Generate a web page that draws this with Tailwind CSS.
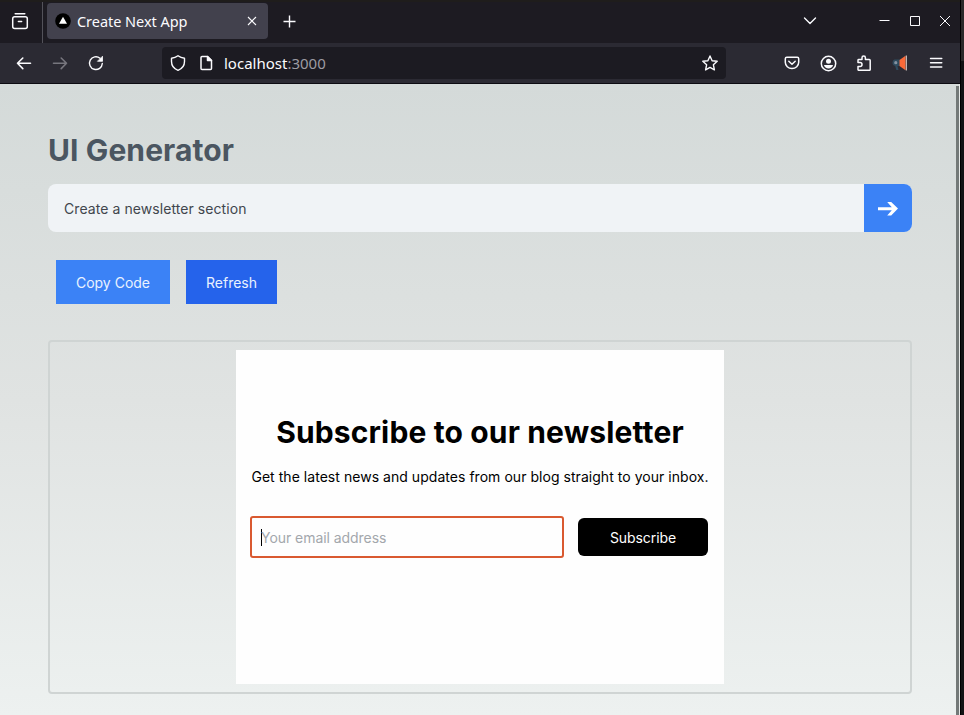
<!DOCTYPE html>
<html lang="en">
<head>
<meta charset="utf-8">
<title>Create Next App</title>
<script src="https://cdn.jsdelivr.net/npm/@tailwindcss/browser@4"></script>
</head>
<body class="w-[964px] h-[715px] overflow-hidden bg-[#151617] flex font-['Inter',sans-serif]">
<div class="w-[960px] h-full flex flex-col shrink-0">
  <header class="shrink-0 text-[#fbfbfe] font-['Noto_Sans',sans-serif]">
    <div class="h-[43px] bg-[#1d1b22] border-t-2 border-[#1f1d1c] flex items-start">
      <div class="w-[43px] h-[41px] border-r border-[#53525a] flex items-center justify-center pr-0.5 pb-[3px]">
        <svg class="w-[18px] h-[18px]" viewBox="0 0 18 18" fill="none" stroke="currentColor" stroke-width="1.5" stroke-linecap="round"><path d="M4.200 1.800h9.600"/><rect x="1.700" y="4.700" width="14.600" height="11.800" rx="2"/><path d="M7.400 9.500h3.200"/></svg>
      </div>
      <div class="ml-1 mt-px w-[221px] h-9 rounded-[4px] bg-[#42414d] flex items-center pl-2 pr-[9px]">
        <svg class="w-4 h-4" viewBox="0 0 16 16"><circle cx="8" cy="8" r="7.800" fill="#000"/><path d="M8 3.800l4 7H4z" fill="#fff"/></svg>
        <span class="ml-1.5 text-[14.5px] leading-5 tracking-[-0.04px] whitespace-nowrap">Create Next App</span>
        <svg class="ml-auto w-3.5 h-3.5" viewBox="0 0 14 14" fill="none" stroke="currentColor" stroke-width="1.100"><path d="M3 3l8 8M11 3l-8 8"/></svg>
      </div>
      <svg class="ml-[15px] mt-[13px] w-[13px] h-[13px]" viewBox="0 0 13 13" fill="none" stroke="currentColor" stroke-width="1.400"><path d="M6.500.5v12M.5 6.500h12"/></svg>
      <svg class="ml-auto mr-[62px] mt-[13px] w-[14px] h-[12px]" viewBox="0 0 14 12" fill="none" stroke="currentColor" stroke-width="1.400" stroke-linecap="round" stroke-linejoin="round"><path d="M1.500 3L7 8.500 12.500 3"/></svg>
      <svg class="mr-5 mt-[13px] w-[11px] h-[11px]" viewBox="0 0 11 11"><path d="M.5 5h10v1H.5z" fill="currentColor"/></svg>
      <svg class="mr-5 mt-[14px] w-[10px] h-[10px]" viewBox="0 0 10 10" fill="none" stroke="currentColor"><path d="M.5.5h9v9h-9z"/></svg>
      <svg class="mr-[10px] mt-[14px] w-[10px] h-[10px]" viewBox="0 0 10 10" fill="none" stroke="currentColor"><path d="M0 0l10 10M10 0L0 10"/></svg>
    </div>
    <div class="h-[41px] bg-[#2b2a33] border-b border-[#0c0b11] flex items-center">
      <svg class="ml-4 w-4 h-4" viewBox="0 0 16 16" fill="none" stroke="currentColor" stroke-width="1.600" stroke-linecap="round" stroke-linejoin="round"><path d="M14.500 8.300H1.500M6.800 3l-5.300 5.300 5.300 5.300"/></svg>
      <svg class="ml-5 w-4 h-4 text-[#77767e]" viewBox="0 0 16 16" fill="none" stroke="currentColor" stroke-width="1.600" stroke-linecap="round" stroke-linejoin="round"><path d="M1.500 8.300h13M9.200 3l5.300 5.300-5.300 5.300"/></svg>
      <svg class="ml-5 w-4 h-4" viewBox="0 0 16 16" fill="none" stroke="currentColor" stroke-width="1.400" stroke-linecap="round"><path d="M14.300 8.500A6.400 6.400 0 1 1 12 3.200"/><path d="M14.500 1.600v4.700H9.800z" fill="currentColor" stroke-width=".8" stroke-linejoin="round"/></svg>
      <div class="ml-[58px] w-[564px] h-8 rounded-[4px] bg-[#1c1b22] flex items-center pl-2 pr-2">
        <svg class="w-4 h-4" viewBox="0 0 16 16" fill="none" stroke="currentColor" stroke-width="1.400" stroke-linejoin="round"><path d="M8 .8C10 2.300 12 3 14.500 3.200V6.500C14.500 11 12 13.800 8 15.300 4 13.800 1.500 11 1.500 6.500V3.200C4 3 6 2.300 8 .8z"/></svg>
        <svg class="ml-3 w-4 h-4" viewBox="0 0 16 16" fill="none" stroke="currentColor" stroke-width="1.500" stroke-linejoin="round"><path d="M4 1.500h5.500L13.500 5.500V13.500q0 1-1 1H4q-1 0-1-1v-11q0-1 1-1z"/><path d="M9.500 1.500v4h4z" fill="currentColor"/></svg>
        <span class="ml-2.5 text-[15px] leading-5 whitespace-nowrap">localhost<span class="text-[#9c9ba3]">:3000</span></span>
        <svg class="ml-auto w-4 h-4" viewBox="0 0 16 16" fill="none" stroke="currentColor" stroke-width="1.400" stroke-linejoin="round"><path d="M8 1l2.100 4.700 5.100.6-3.800 3.500 1 5.100L8 12.400l-4.400 2.500 1-5.100L.8 6.300l5.100-.6z"/></svg>
      </div>
      <svg class="ml-[58px] w-4 h-4" viewBox="0 0 16 16" fill="none" stroke="currentColor" stroke-width="1.500" stroke-linecap="round" stroke-linejoin="round"><path d="M2.800 2.200h10.400q1.500 0 1.500 1.500V7.300A6.700 6.200 0 0 1 1.300 7.300V3.700q0-1.500 1.500-1.500z"/><path d="M4.800 6.200L8 9.200l3.200-3"/></svg>
      <svg class="ml-5 w-[17px] h-[17px]" viewBox="0 0 17 17" fill="none"><circle cx="8.500" cy="8.500" r="7.200" stroke="currentColor" stroke-width="1.500"/><circle cx="8.500" cy="6.300" r="2.500" fill="currentColor"/><path d="M4 10h9c-.2 2.200-2.300 3.500-4.500 3.500S4.200 12.200 4 10z" fill="currentColor"/></svg>
      <svg class="ml-[19px] w-4 h-4" viewBox="0 0 16 16" fill="none" stroke="currentColor" stroke-width="1.500" stroke-linejoin="round"><path d="M2 7.500V5.200q0-.7.700-.7H6V2.700a1.700 1.700 0 0 1 3.400 0v1.800h3.900q.9 0 .9.900v9q0 .9-.9.900H2.700q-.7 0-.7-.8V11.500h2a2 2 0 0 0 0-4z"/></svg>
      <svg class="ml-5 w-4 h-4" viewBox="0 0 16 16"><path d="M2.500 4.500h6v6.500h-3l1 4H4.300L3.200 11Q.5 10.500.5 7.800T2.500 4.500z" fill="#2f4a5d"/><circle cx="3.800" cy="7.700" r="1.600" fill="#8492a1"/><path d="M7.500 5L13.500.8v14.400L7.500 11z" fill="#fa6938"/><path d="M14.300.5v15" stroke="#e6d9d5"/></svg>
      <svg class="ml-[20px] w-4 h-4" viewBox="0 0 16 16" stroke="currentColor" stroke-width="1.400" stroke-linecap="round"><path d="M2.500 3.500h11.300M2.500 7.800h11.300M2.500 12h11.300"/></svg>
    </div>
  </header>
  <div class="flex-1 flex bg-linear-to-b from-[#d4dad9] via-[#e0e3e2] to-[#edf1f0]">
    <main class="w-[956px] px-12 pr-11 pt-12 flex flex-col items-start">
      <h1 class="text-[30px] leading-9 tracking-[0.1px] font-bold text-[#4b5661] whitespace-nowrap">UI Generator</h1>
      <div class="mt-4 w-[864px] h-12 rounded-lg overflow-hidden flex bg-[#f0f3f6]">
        <div class="flex-1 px-4 pt-0.5 flex items-center text-sm tracking-[0.07px] text-[#41464d] whitespace-nowrap">Create a newsletter section</div>
        <button class="w-12 bg-[#3b82f6] flex items-center justify-center text-white">
          <svg class="w-6 h-6" viewBox="0 0 24 24" fill="currentColor"><path d="M2 11.200h13.800l-4.600-5.200h4L22 12.600 15.200 19.400h-4l4.600-5.200H2z"/></svg>
        </button>
      </div>
      <div class="mt-7 ml-2 flex gap-4 text-sm text-[#e9f2ff]">
        <button class="w-[114px] h-11 pt-0.5 bg-[#3b82f6]">Copy Code</button>
        <button class="w-[91px] h-11 pt-0.5 bg-[#2563eb]">Refresh</button>
      </div>
      <div class="mt-9 w-[864px] h-[354px] border-2 border-[#cfd4d3] rounded-[4px] flex justify-center pt-2">
        <section class="w-[488px] h-[334px] bg-[#fefefe] pt-16 text-black">
          <h2 class="text-[30px] leading-9 tracking-[0.14px] font-bold text-center whitespace-nowrap">Subscribe to our newsletter</h2>
          <p class="mt-[17px] text-sm tracking-[0.04px] text-center whitespace-nowrap">Get the latest news and updates from our blog straight to your inbox.</p>
          <div class="mt-[29px] ml-3.5 flex items-center">
            <div class="w-[314px] h-[42px] rounded-[3px] border-2 border-[#d95930] flex items-center pl-[9px]">
              <span class="w-px h-[17px] bg-black"></span>
              <span class="pt-0.5 -ml-px text-sm tracking-[-0.05px] text-[#a3a7ac] whitespace-nowrap">Your email address</span>
            </div>
            <button class="ml-3.5 w-[130px] h-[38px] pt-0.5 rounded-md bg-black text-sm tracking-[-0.08px] text-white">Subscribe</button>
          </div>
        </section>
      </div>
    </main>
    <div class="mt-0.5 w-[3px] bg-[#737978]"></div>
    <div class="w-px bg-[#e6e9e8]"></div>
  </div>
</div>
<div class="flex-1 flex flex-col border-l border-black"><div class="h-[61px] bg-[#2b2b2b]"></div><div class="flex-1 bg-[#121314]"></div></div>
</body>
</html>
